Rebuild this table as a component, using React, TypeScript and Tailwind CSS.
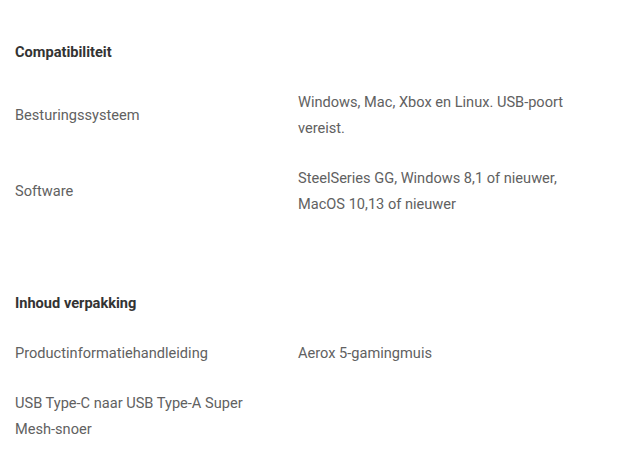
import React from 'react';

type Row = { label: string; value?: string };
type Section = { title: string; rows: Row[] };

const sections: Section[] = [
  {
    title: 'Compatibiliteit',
    rows: [
      { label: 'Besturingssysteem', value: 'Windows, Mac, Xbox en Linux. USB-poort vereist.' },
      { label: 'Software', value: 'SteelSeries GG, Windows 8,1 of nieuwer, MacOS 10,13 of nieuwer' },
    ],
  },
  {
    title: 'Inhoud verpakking',
    rows: [
      { label: 'Productinformatiehandleiding', value: 'Aerox 5-gamingmuis' },
      { label: 'USB Type-C naar USB Type-A Super Mesh-snoer' },
    ],
  },
];

const App: React.FC = () => {
  return (
    <div className="min-h-screen bg-white px-[15px] pt-[39px] font-['Roboto',sans-serif] text-[14.6px] leading-[26px]">
      {sections.map((section, i) => (
        <section key={i} className={i > 0 ? 'mt-[73px]' : ''}>
          <h3 className="font-bold text-[#333]">{section.title}</h3>
          {section.rows.map((row, j) => (
            <div key={j} className="mt-[24px] grid grid-cols-[283px_283px] items-center text-[#616161]">
              <div className="pr-8">{row.label}</div>
              <div>{row.value}</div>
            </div>
          ))}
        </section>
      ))}
    </div>
  );
};

export default App;
